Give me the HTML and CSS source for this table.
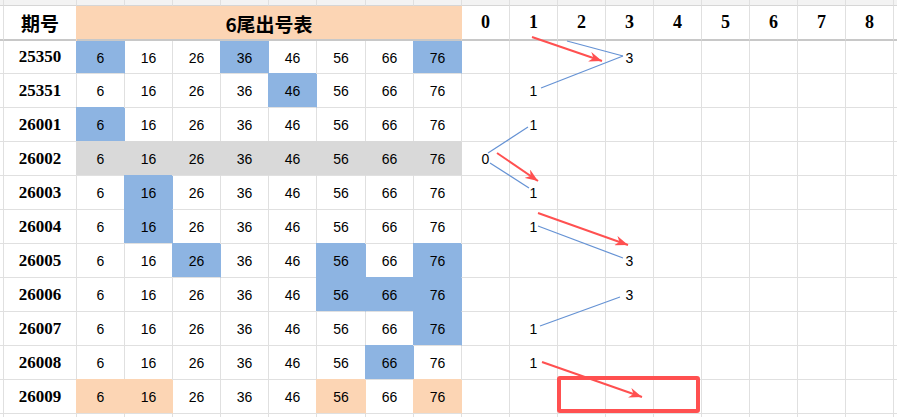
FILE: index.html
```html
<!DOCTYPE html>
<html lang="zh">
<head>
<meta charset="utf-8">
<title>6尾出号表</title>
<link rel="stylesheet" href="styles.css">
</head>
<body>
<div class="sheet">
  <div class="grid">
    <!-- partial row at top -->
    <div class="c band"></div><div class="c band"></div><div class="c band"></div><div class="c band"></div><div class="c band"></div><div class="c band"></div><div class="c band"></div><div class="c band"></div><div class="c band"></div><div class="c band"></div><div class="c band"></div><div class="c band"></div><div class="c band"></div><div class="c band"></div><div class="c band"></div><div class="c band"></div><div class="c band"></div><div class="c band"></div><div class="c band"></div><div class="c band"></div>

    <!-- header -->
    <div class="c hd"></div>
    <div class="c hd title">期号</div>
    <div class="c hd merged title">6尾出号表</div>
    <div class="c hd num">0</div><div class="c hd num">1</div><div class="c hd num">2</div><div class="c hd num">3</div><div class="c hd num">4</div><div class="c hd num">5</div><div class="c hd num">6</div><div class="c hd num">7</div><div class="c hd num">8</div>
    <div class="c hd"></div>

    <!-- 25350 -->
    <div class="c"></div><div class="c lbl">25350</div>
    <div class="c v b">6</div><div class="c v">16</div><div class="c v">26</div><div class="c v b">36</div><div class="c v">46</div><div class="c v">56</div><div class="c v">66</div><div class="c v b">76</div>
    <div class="c v"></div><div class="c v"></div><div class="c v"></div><div class="c v">3</div><div class="c v"></div><div class="c v"></div><div class="c v"></div><div class="c v"></div><div class="c v"></div>
    <div class="c"></div>

    <!-- 25351 -->
    <div class="c"></div><div class="c lbl">25351</div>
    <div class="c v">6</div><div class="c v">16</div><div class="c v">26</div><div class="c v">36</div><div class="c v b">46</div><div class="c v">56</div><div class="c v">66</div><div class="c v">76</div>
    <div class="c v"></div><div class="c v">1</div><div class="c v"></div><div class="c v"></div><div class="c v"></div><div class="c v"></div><div class="c v"></div><div class="c v"></div><div class="c v"></div>
    <div class="c"></div>

    <!-- 26001 -->
    <div class="c"></div><div class="c lbl">26001</div>
    <div class="c v b">6</div><div class="c v">16</div><div class="c v">26</div><div class="c v">36</div><div class="c v">46</div><div class="c v">56</div><div class="c v">66</div><div class="c v">76</div>
    <div class="c v"></div><div class="c v">1</div><div class="c v"></div><div class="c v"></div><div class="c v"></div><div class="c v"></div><div class="c v"></div><div class="c v"></div><div class="c v"></div>
    <div class="c"></div>

    <!-- 26002 -->
    <div class="c"></div><div class="c lbl">26002</div>
    <div class="c v g">6</div><div class="c v g">16</div><div class="c v g">26</div><div class="c v g">36</div><div class="c v g">46</div><div class="c v g">56</div><div class="c v g">66</div><div class="c v g">76</div>
    <div class="c v">0</div><div class="c v"></div><div class="c v"></div><div class="c v"></div><div class="c v"></div><div class="c v"></div><div class="c v"></div><div class="c v"></div><div class="c v"></div>
    <div class="c"></div>

    <!-- 26003 -->
    <div class="c"></div><div class="c lbl">26003</div>
    <div class="c v">6</div><div class="c v b">16</div><div class="c v">26</div><div class="c v">36</div><div class="c v">46</div><div class="c v">56</div><div class="c v">66</div><div class="c v">76</div>
    <div class="c v"></div><div class="c v">1</div><div class="c v"></div><div class="c v"></div><div class="c v"></div><div class="c v"></div><div class="c v"></div><div class="c v"></div><div class="c v"></div>
    <div class="c"></div>

    <!-- 26004 -->
    <div class="c"></div><div class="c lbl">26004</div>
    <div class="c v">6</div><div class="c v b">16</div><div class="c v">26</div><div class="c v">36</div><div class="c v">46</div><div class="c v">56</div><div class="c v">66</div><div class="c v">76</div>
    <div class="c v"></div><div class="c v">1</div><div class="c v"></div><div class="c v"></div><div class="c v"></div><div class="c v"></div><div class="c v"></div><div class="c v"></div><div class="c v"></div>
    <div class="c"></div>

    <!-- 26005 -->
    <div class="c"></div><div class="c lbl">26005</div>
    <div class="c v">6</div><div class="c v">16</div><div class="c v b">26</div><div class="c v">36</div><div class="c v">46</div><div class="c v b">56</div><div class="c v">66</div><div class="c v b">76</div>
    <div class="c v"></div><div class="c v"></div><div class="c v"></div><div class="c v">3</div><div class="c v"></div><div class="c v"></div><div class="c v"></div><div class="c v"></div><div class="c v"></div>
    <div class="c"></div>

    <!-- 26006 -->
    <div class="c"></div><div class="c lbl">26006</div>
    <div class="c v">6</div><div class="c v">16</div><div class="c v">26</div><div class="c v">36</div><div class="c v">46</div><div class="c v b">56</div><div class="c v b">66</div><div class="c v b">76</div>
    <div class="c v"></div><div class="c v"></div><div class="c v"></div><div class="c v">3</div><div class="c v"></div><div class="c v"></div><div class="c v"></div><div class="c v"></div><div class="c v"></div>
    <div class="c"></div>

    <!-- 26007 -->
    <div class="c"></div><div class="c lbl">26007</div>
    <div class="c v">6</div><div class="c v">16</div><div class="c v">26</div><div class="c v">36</div><div class="c v">46</div><div class="c v">56</div><div class="c v">66</div><div class="c v b">76</div>
    <div class="c v"></div><div class="c v">1</div><div class="c v"></div><div class="c v"></div><div class="c v"></div><div class="c v"></div><div class="c v"></div><div class="c v"></div><div class="c v"></div>
    <div class="c"></div>

    <!-- 26008 -->
    <div class="c"></div><div class="c lbl">26008</div>
    <div class="c v">6</div><div class="c v">16</div><div class="c v">26</div><div class="c v">36</div><div class="c v">46</div><div class="c v">56</div><div class="c v b">66</div><div class="c v">76</div>
    <div class="c v"></div><div class="c v">1</div><div class="c v"></div><div class="c v"></div><div class="c v"></div><div class="c v"></div><div class="c v"></div><div class="c v"></div><div class="c v"></div>
    <div class="c"></div>

    <!-- 26009 -->
    <div class="c"></div><div class="c lbl">26009</div>
    <div class="c v p">6</div><div class="c v p">16</div><div class="c v">26</div><div class="c v">36</div><div class="c v">46</div><div class="c v p">56</div><div class="c v">66</div><div class="c v p">76</div>
    <div class="c v"></div><div class="c v"></div><div class="c v"></div><div class="c v"></div><div class="c v"></div><div class="c v"></div><div class="c v"></div><div class="c v"></div><div class="c v"></div>
    <div class="c"></div>

    <!-- partial row at bottom -->
    <div class="c"></div><div class="c"></div><div class="c"></div><div class="c"></div><div class="c"></div><div class="c"></div><div class="c"></div><div class="c"></div><div class="c"></div><div class="c"></div><div class="c"></div><div class="c"></div><div class="c"></div><div class="c"></div><div class="c"></div><div class="c"></div><div class="c"></div><div class="c"></div><div class="c"></div><div class="c"></div>
  </div>

  <svg class="overlay" width="897" height="417" viewBox="0 0 897 417" xmlns="http://www.w3.org/2000/svg">
    <defs>
      <marker id="ah" markerUnits="userSpaceOnUse" markerWidth="14" markerHeight="10" refX="13" refY="5" orient="auto">
        <path d="M0,0 L13,5 L0,10 L4,5 Z" fill="#ff5050"/>
      </marker>
    </defs>
    <g stroke="#6592d4" stroke-width="1.2" fill="none">
      <line x1="567" y1="41" x2="623" y2="56"/>
      <line x1="541" y1="88" x2="623" y2="56"/>
      <line x1="488" y1="153" x2="528" y2="127"/>
      <line x1="490" y1="163" x2="529" y2="188"/>
      <line x1="538" y1="226" x2="623" y2="258"/>
      <line x1="540" y1="326" x2="620" y2="297"/>
    </g>
    <g stroke="#ff5050" stroke-width="2" fill="none">
      <line x1="532" y1="37" x2="602" y2="61" marker-end="url(#ah)"/>
      <line x1="497" y1="153" x2="538" y2="181" marker-end="url(#ah)"/>
      <line x1="538" y1="213" x2="628" y2="245" marker-end="url(#ah)"/>
      <line x1="542" y1="362" x2="642" y2="397" marker-end="url(#ah)"/>
      <rect x="559" y="378" width="139" height="33" rx="1" stroke-width="4"/>
    </g>
  </svg>
</div>
</body>
</html>
```

FILE: styles.css
```css
html, body {
  margin: 0;
  padding: 0;
  background: #ffffff;
}

.sheet {
  position: relative;
  width: 897px;
  height: 417px;
  overflow: hidden;
  background: #ffffff;
}

.grid {
  display: grid;
  grid-template-columns: 4px 73px 48px 48px 48px 48px 48px 49px 48px 48px repeat(9, 48px) 4px;
  grid-template-rows: 6px 35px 33px repeat(10, 34px) 10px;
  font-family: "Liberation Sans", Arial, sans-serif;
  font-size: 14px;
  color: #000;
}

.c {
  box-sizing: border-box;
  border-right: 1px solid #e0e0e0;
  border-bottom: 1px solid #e0e0e0;
  display: flex;
  align-items: center;
  justify-content: center;
  background: #ffffff;
  white-space: nowrap;
}

.band {
  background: #f3f3f3;
  border-bottom-color: #d6d6d6;
}

.hd {
  position: relative;
  z-index: 1;
  border-bottom: 2px solid #c8c8c8;
}

.title {
  font-family: "Noto Sans CJK SC", "Liberation Serif", sans-serif;
  font-weight: 700;
  font-size: 19px;
}

.merged {
  grid-column: span 8;
  background: #fcd5b4;
  border-right-color: #fcd5b4;
  box-shadow: -1px 0 0 #fcd5b4;
  padding-top: 1px;
}

.num {
  font-family: "Liberation Serif", serif;
  font-weight: 700;
  font-size: 18px;
}

.lbl {
  font-family: "Liberation Serif", serif;
  font-weight: 700;
  font-size: 17px;
}

.v {
  padding-top: 1px;
}

.b {
  background: #8db4e2;
  border-right-color: #8db4e2;
  box-shadow: -1px -1px 0 #8db4e2;
}

.g {
  background: #d9d9d9;
  border-right-color: #d9d9d9;
  box-shadow: -1px -1px 0 #d9d9d9;
}

.p {
  background: #fcd5b4;
  border-right-color: #fcd5b4;
  box-shadow: -1px -1px 0 #fcd5b4;
}

.overlay {
  position: absolute;
  left: 0;
  top: 0;
  z-index: 2;
  pointer-events: none;
}
```
